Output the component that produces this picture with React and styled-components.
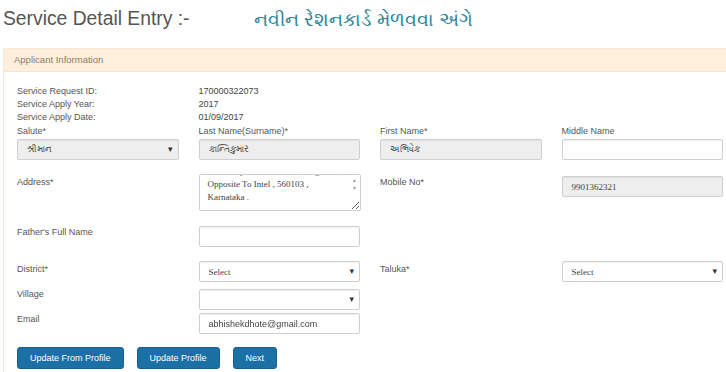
import React, { useEffect, useRef } from 'react';
import styled, { createGlobalStyle } from 'styled-components';

const Global = createGlobalStyle`
    body {
        margin: 0;
        background: #ffffff;
        font-family: "Liberation Sans", Arial, sans-serif;
        color: #555;
    }
`;

export default function App(){

    const areaRef = useRef(null);

    useEffect(() => {
        if(areaRef.current){
            areaRef.current.scrollTop = areaRef.current.scrollHeight;
        }
    }, []);

    return (
        <Tela>
            <Global />
            <Titulo>
                <h1>Service Detail Entry :-</h1>
                <h2>નવીન રેશનકાર્ડ મેળવવા અંગે</h2>
            </Titulo>
            <Painel>
                <Cabecalho>Applicant Information</Cabecalho>
                <Corpo>
                    <Info>
                        <span>Service Request ID:</span><b>170000322073</b>
                        <span>Service Apply Year:</span><b>2017</b>
                        <span>Service Apply Date:</span><b>01/09/2017</b>
                    </Info>
                    <Grade top={1}>
                        <Campo>
                            <Rotulo>Salute*</Rotulo>
                            <Caixa disabled>
                                <Gu>શ્રીમાન</Gu>
                                <Seta>▾</Seta>
                            </Caixa>
                        </Campo>
                        <Campo>
                            <Rotulo>Last Name(Surname)*</Rotulo>
                            <Caixa disabled><Gu>કાન્તિકુમાર</Gu></Caixa>
                        </Campo>
                        <Campo>
                            <Rotulo>First Name*</Rotulo>
                            <Caixa disabled><Gu>અભિષેક</Gu></Caixa>
                        </Campo>
                        <Campo>
                            <Rotulo>Middle Name</Rotulo>
                            <Caixa />
                        </Campo>
                    </Grade>
                    <Grade top={14}>
                        <Rotulo inline>Address*</Rotulo>
                        <AreaCaixa>
                            <AreaTexto
                                ref={areaRef}
                                readOnly
                                rows={2}
                                value={"Near Kalyani Tech Park , Bangalore ,\nOpposite To Intel , 560103 ,\nKarnataka ."}
                            />
                            <Rolagem>
                                <i>▴</i>
                                <i>▾</i>
                            </Rolagem>
                        </AreaCaixa>
                        <Rotulo inline>Mobile No*</Rotulo>
                        <Caixa disabled serif top={2}>9901362321</Caixa>
                    </Grade>
                    <Grade top={15}>
                        <Rotulo inline top={-2}>Father's Full Name</Rotulo>
                        <Caixa />
                    </Grade>
                    <Grade top={14}>
                        <Rotulo inline top={0}>District*</Rotulo>
                        <Caixa serif>Select<Seta>▾</Seta></Caixa>
                        <Rotulo inline top={0}>Taluka*</Rotulo>
                        <Caixa serif>Select<Seta>▾</Seta></Caixa>
                    </Grade>
                    <Grade top={7}>
                        <Rotulo inline top={-3}>Village</Rotulo>
                        <Caixa><Seta>▾</Seta></Caixa>
                    </Grade>
                    <Grade top={3}>
                        <Rotulo inline top={-2}>Email</Rotulo>
                        <Caixa>abhishekdhote@gmail.com</Caixa>
                    </Grade>
                    <Botoes>
                        <Botao>Update From Profile</Botao>
                        <Botao>Update Profile</Botao>
                        <Botao>Next</Botao>
                    </Botoes>
                </Corpo>
            </Painel>
        </Tela>
    );
}

const Tela = styled.div`
    padding: 0 0 0 3px;
    width: 723px;
    height: 372px;
    overflow: hidden;
`;
const Titulo = styled.div`
    display: flex;
    align-items: center;
    height: 40px;
    padding-bottom: 8px;
    h1{
        margin: 0;
        font-size: 19.3px;
        font-weight: normal;
        color: #555;
        width: 251px;
        padding-bottom: 2px;
    }
    h2{
        margin: 0;
        font-size: 19px;
        font-weight: normal;
        color: #2f8596;
    }
`;
const Painel = styled.div`
    border: 1px solid #f6ead6;
    border-right: none;
    background: #fff;
`;
const Cabecalho = styled.div`
    background: #fcf0dc;
    border-bottom: 1px solid #f5e6cc;
    height: 22px;
    line-height: 22px;
    padding-left: 10px;
    font-size: 9.5px;
    color: #8c7b66;
`;
const Corpo = styled.div`
    padding: 13px 0 20px 13px;
    width: 706px;
`;
const Info = styled.div`
    display: grid;
    grid-template-columns: 181.5px 1fr;
    font-size: 9px;
    line-height: 13px;
    span{
        color: #555;
    }
    b{
        font-weight: normal;
        color: #444;
    }
`;
const Grade = styled.div`
    display: grid;
    grid-template-columns: repeat(4, 161.5px);
    column-gap: 20px;
    align-items: start;
    margin-top: ${props => props.top}px;
`;
const Campo = styled.div`
    display: flex;
    flex-direction: column;
`;
const Rotulo = styled.div`
    font-size: 9px;
    line-height: 13px;
    color: #555;
    margin-top: ${props => props.inline ? 2 + (props.top || 0) : 0}px;
    margin-bottom: ${props => props.inline ? 0 : 1}px;
`;
const Caixa = styled.div`
    position: relative;
    box-sizing: border-box;
    height: 21px;
    margin-top: ${props => props.top || 0}px;
    border: 1px solid #cfcfcf;
    border-radius: 2px;
    background: ${props => props.disabled ? '#eeeeee' : '#ffffff'};
    box-shadow: inset 0 1px 1px rgba(0, 0, 0, 0.06);
    padding: 0 9px;
    display: flex;
    align-items: center;
    font-family: ${props => props.serif ? '"Liberation Serif", "Times New Roman", serif' : '"Liberation Sans", Arial, sans-serif'};
    font-size: 9px;
    color: #444;
`;
const Gu = styled.span`
    font-size: 9px;
    color: #555;
`;
const Seta = styled.span`
    position: absolute;
    right: 5px;
    top: 4px;
    font-size: 9px;
    color: #333;
    font-family: "DejaVu Sans", sans-serif;
`;
const AreaCaixa = styled.div`
    position: relative;
    width: 162px;
    height: 37px;
`;
const AreaTexto = styled.textarea`
    display: block;
    box-sizing: border-box;
    width: 162px;
    height: 37px;
    margin: 0;
    border: 1px solid #cfcfcf;
    border-radius: 2px;
    padding: 4px 8px 6px 8px;
    font-family: "Liberation Serif", "Times New Roman", serif;
    font-size: 9px;
    line-height: 13px;
    color: #444;
    resize: vertical;
    overflow-y: scroll;
    &::-webkit-scrollbar{
        width: 9px;
    }
    &::-webkit-scrollbar-track{
        background: #f7f7f7;
    }
    &::-webkit-scrollbar-thumb{
        background: #e4e4e4;
    }
`;
const Rolagem = styled.div`
    position: absolute;
    top: 2px;
    right: 2px;
    width: 8px;
    display: flex;
    flex-direction: column;
    align-items: center;
    pointer-events: none;
    i{
        font-style: normal;
        font-family: "DejaVu Sans", sans-serif;
        font-size: 6px;
        line-height: 8px;
        color: #9a9a9a;
    }
`;
const Botoes = styled.div`
    display: flex;
    gap: 13px;
    margin-top: 13px;
`;
const Botao = styled.button`
    height: 22px;
    padding: 0 12px;
    border: 1px solid #15618f;
    border-radius: 3px;
    background: #1b70a6;
    color: #ffffff;
    font-family: "Liberation Sans", Arial, sans-serif;
    font-size: 9px;
`;
